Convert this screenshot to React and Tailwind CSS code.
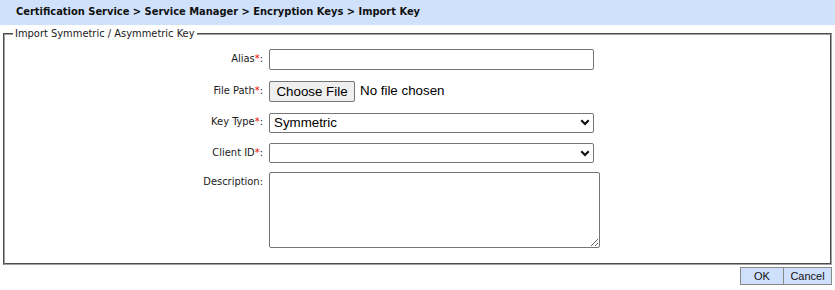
import { useState } from "react";

const LABEL_FONT = { fontFamily: '"DejaVu Sans Condensed", Tahoma, "Liberation Sans", sans-serif' };

function Label({ text, required }) {
  return (
    <div className="w-[258px] shrink-0 text-right text-[11px] text-[#1a1a1a]">
      {text}
      {required && <span className="text-[#e00]">*</span>}:
    </div>
  );
}

function Chevron() {
  return (
    <svg width="10" height="7" viewBox="0 0 10 7" className="shrink-0">
      <path d="M1.3 1.3 L5 5 L8.7 1.3" fill="none" stroke="#111" strokeWidth="2.2" />
    </svg>
  );
}

function FakeSelect({ value }) {
  return (
    <div className="flex h-[20px] w-[325px] items-center justify-between rounded-[2px] border border-[#767676] bg-white pr-[3px] pl-[4px] font-['Liberation_Sans',Arial,sans-serif] text-[13.33px] text-black">
      <span>{value}</span>
      <Chevron />
    </div>
  );
}

export default function App() {
  const [alias, setAlias] = useState("");
  const [desc, setDesc] = useState("");

  return (
    <div className="h-[290px] w-[835px] overflow-hidden bg-white" style={LABEL_FONT}>
      <div className="flex h-[25px] items-center bg-[#d0e1fc] pl-[16px] text-[11px] font-bold text-[#111]">
        Certification Service &gt; Service Manager &gt; Encryption Keys &gt; Import Key
      </div>

      <fieldset className="mx-[3px] mt-[1px] h-[239px] border-2 border-[#a0a0a0] [border-style:groove]">
        <legend className="ml-[8px] px-[2px] text-[11px] text-[#1a1a1a]">Import Symmetric / Asymmetric Key</legend>

        <div className="mt-[6px] flex flex-col">
          <div className="flex h-[21px] items-center gap-[6px]">
            <Label text="Alias" required />
            <input
              value={alias}
              onChange={(e) => setAlias(e.target.value)}
              className="h-[21px] w-[325px] rounded-[2px] border border-[#767676] bg-white px-1 font-['Liberation_Sans',Arial,sans-serif] text-[13.33px] outline-none"
            />
          </div>

          <div className="mt-[11px] flex h-[21px] items-center gap-[6px]">
            <Label text="File Path" required />
            <div className="flex items-center gap-[5px] font-['Liberation_Sans',Arial,sans-serif] text-[13.33px] text-black">
              <button className="h-[21px] w-[86px] rounded-[2px] border border-[#767676] bg-[#efefef]">Choose File</button>
              <span>No file chosen</span>
            </div>
          </div>

          <div className="mt-[11px] flex h-[20px] items-center gap-[6px]">
            <Label text="Key Type" required />
            <FakeSelect value="Symmetric" />
          </div>

          <div className="mt-[11px] flex h-[19px] items-center gap-[6px]">
            <Label text="Client ID" required />
            <FakeSelect value="" />
          </div>

          <div className="mt-[9px] flex items-start gap-[6px]">
            <div className="pt-[2px]">
              <Label text="Description" />
            </div>
            <textarea
              value={desc}
              onChange={(e) => setDesc(e.target.value)}
              className="h-[76px] w-[331px] resize rounded-[2px] border border-[#767676] bg-white outline-none"
            />
          </div>
        </div>
      </fieldset>

      <div className="mt-[2px] flex justify-end pr-[3px] font-['Liberation_Sans',Arial,sans-serif] text-[11px] text-[#111]">
        <button className="h-[18px] w-[44px] border border-[#888] bg-[#cfe0fc]">OK</button>
        <button className="h-[18px] w-[48px] border border-l-0 border-[#888] bg-[#cfe0fc]">Cancel</button>
      </div>
    </div>
  );
}
